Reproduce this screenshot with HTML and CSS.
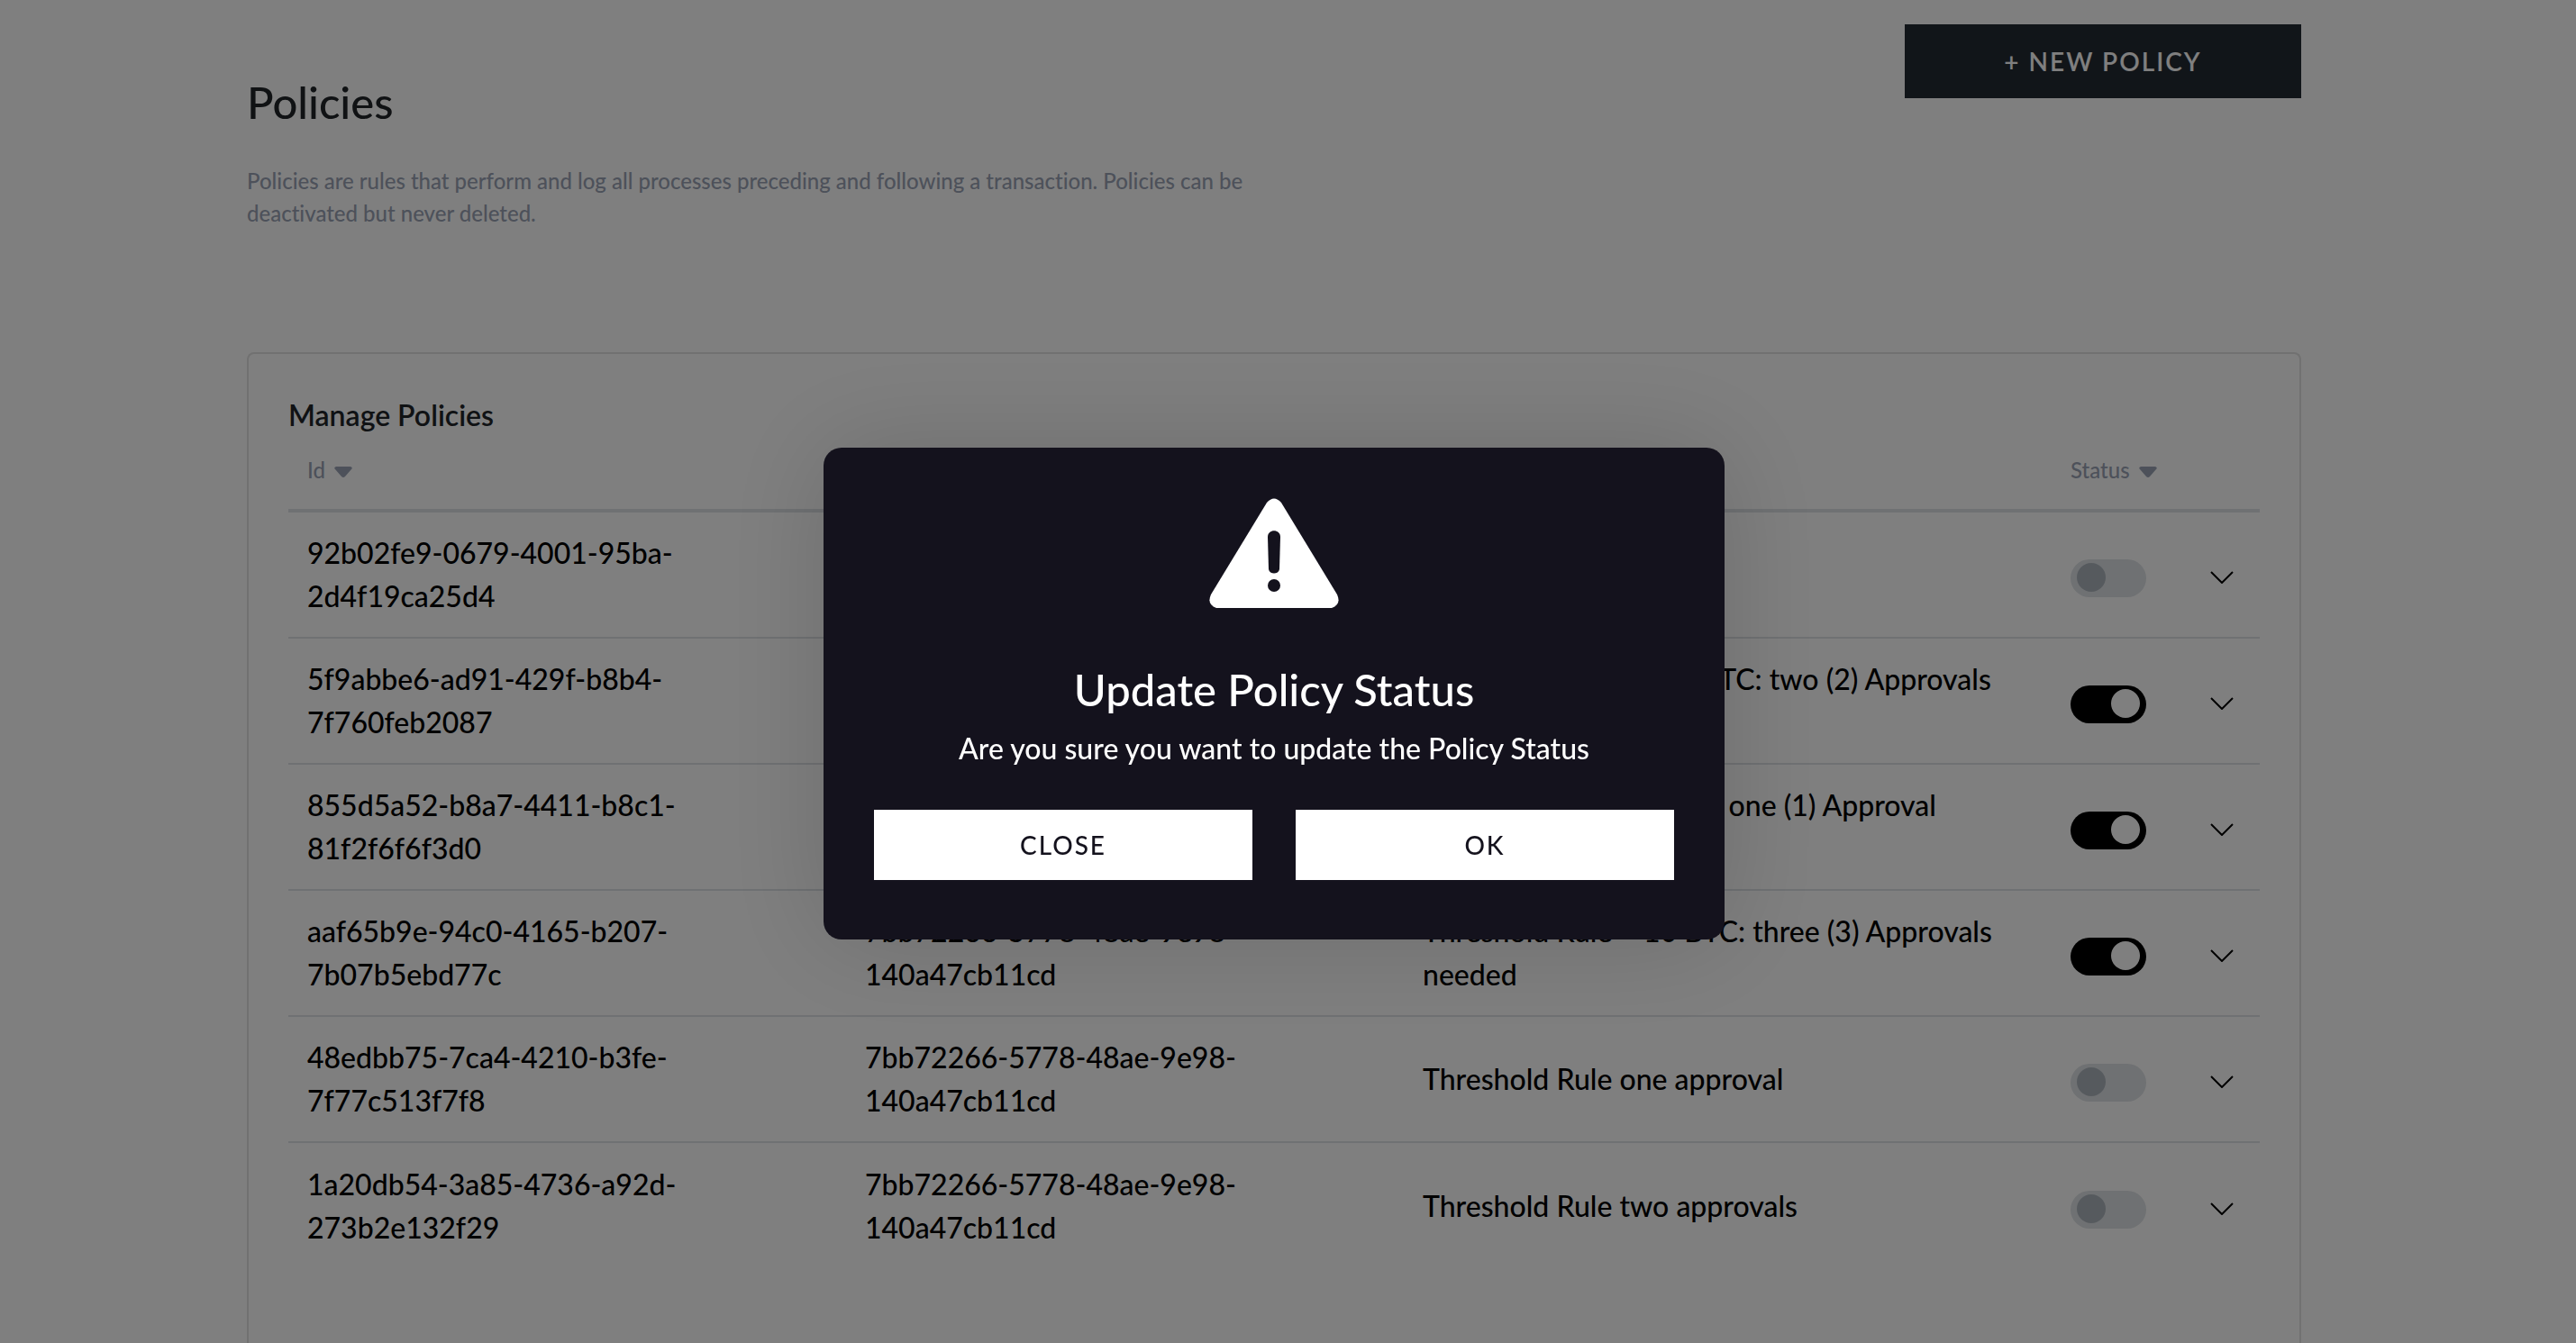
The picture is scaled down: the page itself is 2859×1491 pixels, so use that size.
FILE: index.html
```html
<!DOCTYPE html>
<html lang="en">
<head>
<meta charset="utf-8">
<title>Policies</title>
<link rel="stylesheet" href="styles.css">
</head>
<body>
<main class="page">
  <header class="page-header">
    <div class="intro">
      <h1 class="page-title">Policies</h1>
      <p class="lead">Policies are rules that perform and log all processes preceding and following a transaction. Policies can be deactivated but never deleted.</p>
    </div>
    <button class="btn btn-dark" type="button">+ NEW POLICY</button>
  </header>
  <section class="panel">
    <h2 class="panel-title">Manage Policies</h2>
    <table class="policies">
      <colgroup><col class="col-id"><col class="col-id"><col class="col-name"><col class="col-status"><col class="col-more"></colgroup>
      <thead>
        <tr>
          <th scope="col"><span class="sort">Id <svg class="caret" viewBox="0 0 20 12" aria-hidden="true"><path d="M2 0h16q3 1 1 3l-7 8q-2 2-4 0L1 3q-2-2 1-3z"/></svg></span></th>
          <th scope="col"></th>
          <th scope="col"></th>
          <th scope="col"><span class="sort">Status <svg class="caret" viewBox="0 0 20 12" aria-hidden="true"><path d="M2 0h16q3 1 1 3l-7 8q-2 2-4 0L1 3q-2-2 1-3z"/></svg></span></th>
          <th scope="col"></th>
        </tr>
      </thead>
      <tbody>
        <tr>
          <td>92b02fe9-0679-4001-95ba-2d4f19ca25d4</td>
          <td>7bb72266-5778-48ae-9e98-140a47cb11cd</td>
          <td>Threshold Rule</td>
          <td><input class="switch" type="checkbox" role="switch" aria-label="Policy status"></td>
          <td><button class="more" type="button" aria-label="Show details"><svg viewBox="0 0 26 14" aria-hidden="true"><path d="M1 1l12 12L25 1"/></svg></button></td>
        </tr>
        <tr>
          <td>5f9abbe6-ad91-429f-b8b4-7f760feb2087</td>
          <td>7bb72266-5778-48ae-9e98-140a47cb11cd</td>
          <td>Threshold Rule &gt;= 10 BTC: two (2) Approvals needed</td>
          <td><input class="switch" type="checkbox" role="switch" aria-label="Policy status" checked></td>
          <td><button class="more" type="button" aria-label="Show details"><svg viewBox="0 0 26 14" aria-hidden="true"><path d="M1 1l12 12L25 1"/></svg></button></td>
        </tr>
        <tr>
          <td>855d5a52-b8a7-4411-b8c1-81f2f6f6f3d0</td>
          <td>7bb72266-5778-48ae-9e98-140a47cb11cd</td>
          <td>Threshold Rule &lt;5 BTC: one (1) Approval needed</td>
          <td><input class="switch" type="checkbox" role="switch" aria-label="Policy status" checked></td>
          <td><button class="more" type="button" aria-label="Show details"><svg viewBox="0 0 26 14" aria-hidden="true"><path d="M1 1l12 12L25 1"/></svg></button></td>
        </tr>
        <tr>
          <td>aaf65b9e-94c0-4165-b207-7b07b5ebd77c</td>
          <td>7bb72266-5778-48ae-9e98-140a47cb11cd</td>
          <td>Threshold Rule &gt; 10 BTC: three (3) Approvals needed</td>
          <td><input class="switch" type="checkbox" role="switch" aria-label="Policy status" checked></td>
          <td><button class="more" type="button" aria-label="Show details"><svg viewBox="0 0 26 14" aria-hidden="true"><path d="M1 1l12 12L25 1"/></svg></button></td>
        </tr>
        <tr>
          <td>48edbb75-7ca4-4210-b3fe-7f77c513f7f8</td>
          <td>7bb72266-5778-48ae-9e98-140a47cb11cd</td>
          <td>Threshold Rule one approval</td>
          <td><input class="switch" type="checkbox" role="switch" aria-label="Policy status"></td>
          <td><button class="more" type="button" aria-label="Show details"><svg viewBox="0 0 26 14" aria-hidden="true"><path d="M1 1l12 12L25 1"/></svg></button></td>
        </tr>
        <tr>
          <td>1a20db54-3a85-4736-a92d-273b2e132f29</td>
          <td>7bb72266-5778-48ae-9e98-140a47cb11cd</td>
          <td>Threshold Rule two approvals</td>
          <td><input class="switch" type="checkbox" role="switch" aria-label="Policy status"></td>
          <td><button class="more" type="button" aria-label="Show details"><svg viewBox="0 0 26 14" aria-hidden="true"><path d="M1 1l12 12L25 1"/></svg></button></td>
        </tr>
      </tbody>
    </table>
  </section>
</main>
<div class="overlay">
  <div class="modal" role="dialog" aria-modal="true" aria-labelledby="modal-title">
    <svg class="warning" viewBox="0 0 144 122" aria-hidden="true"><path class="warning-body" d="M64 5Q72-4 80 5L142 107Q147 118 136 122H8Q-3 118 2 107Z"/><path class="warning-mark" d="M65 43C65 34 79 34 79 43L78 79C77 85 67 85 66 79Z"/><circle class="warning-mark" cx="72" cy="97" r="7"/></svg>
    <h2 class="modal-title" id="modal-title">Update Policy Status</h2>
    <p class="modal-text">Are you sure you want to update the Policy Status</p>
    <div class="modal-actions">
      <button class="btn btn-light" type="button">CLOSE</button>
      <button class="btn btn-light" type="button">OK</button>
    </div>
  </div>
</div>
</body>
</html>
```
FILE: styles.css
```css
* {
  box-sizing: border-box;
}

html {
  height: 100%;
  overflow: hidden;
}

body {
  margin: 0;
  height: 100%;
  padding-right: 31px;
  overflow: hidden;
  background: #fff;
  color: #000;
  font: 500 32px/48px Lato, "Noto Sans", sans-serif;
  font-variant-ligatures: none;
}

h1, h2, p {
  margin: 0;
  font-weight: 500;
}

.page {
  display: flex;
  flex-direction: column;
  max-width: 2280px;
  min-height: 100%;
  margin: 0 auto;
}

.page-header {
  display: flex;
  justify-content: space-between;
  align-items: flex-start;
  padding: 27px 0 136px;
}

.intro {
  max-width: 1140px;
  padding-top: 56px;
}

.page-title {
  margin-bottom: 40px;
  color: #212529;
  font-size: 49px;
  line-height: 60px;
}

.lead {
  color: #9aa3b5;
  font-size: 24px;
  line-height: 36px;
}

.btn {
  border: 0;
  padding: 0;
  font: 500 28px/36px Lato, "Noto Sans", sans-serif;
  letter-spacing: 2px;
}

.btn-dark {
  width: 440px;
  height: 82px;
  background: #222a33;
  color: #fff;
  font-weight: 600;
}

.btn-light {
  flex: 1;
  height: 78px;
  background: #fff;
  color: #14121d;
}

.panel {
  flex: 1;
  padding: 44px;
  border: 2px solid #e2e2e2;
  border-bottom: 0;
  border-radius: 8px 8px 0 0;
}

.panel-title {
  color: #212529;
  font-size: 32px;
  font-weight: 600;
  line-height: 48px;
}

.policies {
  width: 100%;
  table-layout: fixed;
  border-collapse: separate;
  border-spacing: 0;
}

.col-id {
  width: 619px;
}

.col-status {
  width: 155px;
}

.col-more {
  width: 76px;
}

.policies th {
  height: 84px;
  padding: 19px 21px 25px;
  border-bottom: 4px solid #dee2e6;
  color: #9aa3b5;
  font-size: 24px;
  font-weight: 500;
  line-height: 36px;
  text-align: left;
}

.policies td {
  height: 140px;
  padding: 20px 21px;
  border-bottom: 2px solid #dee2e6;
  vertical-align: middle;
}

.policies tr:last-child td {
  border-bottom: 0;
}

.policies td:nth-child(4) {
  padding-right: 0;
}

.sort {
  display: inline-flex;
  align-items: center;
  gap: 10px;
}

.caret {
  width: 20px;
  height: 12px;
  margin-top: 4px;
  fill: #9aa3b5;
}

.switch {
  display: block;
  appearance: none;
  width: 84px;
  height: 42px;
  margin: 8px 0 0;
  padding: 4px 7px;
  border-radius: 21px;
  background: #dee2e6;
}

.switch::before {
  content: "";
  display: block;
  width: 32px;
  height: 32px;
  border-radius: 50%;
  background: #adb5bd;
}

.switch:checked {
  background: #000;
}

.switch:checked::before {
  margin-left: auto;
  background: #fff;
}

.more {
  display: block;
  margin-top: 6px;
  padding: 0;
  border: 0;
  background: none;
}

.more svg {
  display: block;
  width: 26px;
  height: 14px;
  fill: none;
  stroke: #000;
  stroke-width: 2;
}

.overlay {
  position: fixed;
  inset: 0;
  display: flex;
  align-items: center;
  justify-content: center;
  padding: 49px 31px 0 0;
  background: rgba(0, 0, 0, 0.5);
}

.modal {
  display: flex;
  flex-direction: column;
  align-items: center;
  width: 1000px;
  padding: 56px 56px 66px;
  border-radius: 20px;
  background: #14121d;
  color: #fff;
  box-shadow: 0 0 120px rgba(0, 0, 0, 0.15);
}

.warning {
  width: 144px;
  height: 122px;
}

.warning-body {
  fill: #fff;
}

.warning-mark {
  fill: #14121d;
}

.modal-title {
  margin-top: 60px;
  font-size: 49px;
  line-height: 60px;
}

.modal-text {
  margin: 12px 0 44px;
}

.modal-actions {
  display: flex;
  gap: 48px;
  width: 100%;
}
```
